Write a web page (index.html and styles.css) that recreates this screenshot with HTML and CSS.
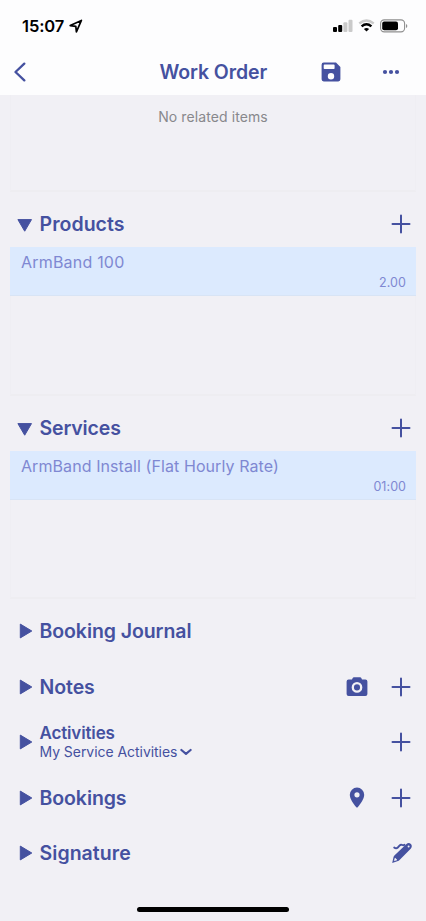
FILE: index.html
```html
<!DOCTYPE html>
<html lang="en">
<head>
<meta charset="utf-8">
<title>Work Order</title>
<link rel="stylesheet" href="styles.css">
</head>
<body>
<svg class="defs" aria-hidden="true">
  <symbol id="plus" viewBox="0 0 20 20"><path d="M10 1.5v17M1.5 10h17" fill="none" stroke="currentColor" stroke-width="2" stroke-linecap="round"/></symbol>
  <symbol id="down" viewBox="0 0 16 16"><path d="M.9 2.6h13.6L7.700 14.2z" fill="currentColor" stroke="currentColor" stroke-width="1" stroke-linejoin="round"/></symbol>
  <symbol id="right" viewBox="0 0 16 16"><path d="M3.3 1.1v13.8L14.8 8z" fill="currentColor" stroke="currentColor" stroke-width="1" stroke-linejoin="round"/></symbol>
</svg>
<div class="phone">
  <header class="top">
    <div class="status">
      <span class="time">15:07</span>
      <svg class="locate" viewBox="0 0 14 14"><path d="M12.4 1.4L1.2 6.6l5.6.7.6 5.6z" fill="none" stroke="#000" stroke-width="1.7" stroke-linejoin="round"/></svg>
      <div class="indicators">
        <svg width="20" height="13" viewBox="0 0 20 13"><g fill="#000"><rect x="0" y="8" width="4" height="5" rx="1"/><rect x="5.2" y="6" width="4" height="7" rx="1"/></g><g fill="#cacaca"><rect x="10.4" y="3.3" width="4" height="9.7" rx="1"/><rect x="15.5" y="0.8" width="4" height="12.2" rx="1"/></g></svg>
        <svg class="wifi" width="17" height="13" viewBox="0 0 17 13"><path d="M1.3 4.5Q8.5-1.6 15.7 4.5" fill="none" stroke="#cacaca" stroke-width="2.3"/><path d="M3.6 7.3Q8.5 3 13.4 7.3" fill="none" stroke="#000" stroke-width="2.4"/><path d="M5.9 9.9Q8.5 7.9 11.1 9.9L8.5 12.6z" fill="#000"/></svg>
        <svg class="battery" width="28" height="14" viewBox="0 0 28 14"><rect x=".6" y=".9" width="24" height="12" rx="3.6" fill="none" stroke="#8f8f8f" stroke-width="1.1"/><rect x="2.2" y="2.5" width="15.8" height="8.8" rx="2" fill="#000"/><path d="M26 5v4q1.3-.7 1.3-2T26 5" fill="#8f8f8f"/></svg>
      </div>
    </div>
    <nav class="nav">
      <svg class="back" viewBox="0 0 12 20"><path d="M10.3 1.6L1.5 10l8.800 8.400" fill="none" stroke="currentColor" stroke-width="2.3" stroke-linecap="round" stroke-linejoin="round"/></svg>
      <h1>Work Order</h1>
      <svg class="save" viewBox="0 0 20 20"><path fill="currentColor" fill-rule="evenodd" d="M2.7.6H15l4.4 4.4v12.3q0 2.1-2.1 2.1H2.7Q.6 19.4.6 17.3V2.7Q.6.6 2.7.6zM3.5 2.6q-.8 0-.8.8v2.8q0 .8.8.8h9.3q.8 0 .8-.8V3.4q0-.8-.8-.8zM10 11a3.2 3.2 0 1 0 0 6.4a3.2 3.2 0 0 0 0-6.4z"/></svg>
      <svg class="more" viewBox="0 0 18 6"><g fill="currentColor"><circle cx="3" cy="3" r="2.1"/><circle cx="9" cy="3" r="2.1"/><circle cx="15" cy="3" r="2.1"/></g></svg>
    </nav>
  </header>

  <main>
    <div class="card related">No related items</div>

    <section>
      <div class="head">
        <svg class="tri"><use href="#down"/></svg><h2 class="products">Products</h2><svg class="plus"><use href="#plus"/></svg>
      </div>
      <div class="card list">
        <div class="item"><div class="name wide">ArmBand 100</div><div class="value">2.00</div></div>
      </div>
    </section>

    <section>
      <div class="head">
        <svg class="tri"><use href="#down"/></svg><h2 class="services">Services</h2><svg class="plus"><use href="#plus"/></svg>
      </div>
      <div class="card list">
        <div class="item"><div class="name">ArmBand Install (Flat Hourly Rate)</div><div class="value">01:00</div></div>
      </div>
    </section>

    <div class="rows">
      <div class="row"><svg class="tri"><use href="#right"/></svg><h2>Booking Journal</h2></div>
      <div class="row"><svg class="tri"><use href="#right"/></svg><h2>Notes</h2>
        <svg class="extra" viewBox="0 0 22 22"><path fill="currentColor" d="M7.9 1.2h6.2q.8 0 1.2.9l.7 1.3h3.4q2 0 2 2v12.700q0 2-2 2H2.600q-2 0-2-2V5.400q0-2 2-2H6l.7-1.300q.4-.9 1.200-.9z"/><circle cx="11" cy="11.400" r="4.200" fill="none" stroke="#f1f0f5" stroke-width="2.300"/></svg>
        <svg class="plus"><use href="#plus"/></svg></div>
      <div class="row"><svg class="tri"><use href="#right"/></svg>
        <div class="stack"><h3>Activities</h3><div class="view">My Service Activities<svg class="caret" viewBox="0 0 12 8"><path d="M1.4 2L6 5.800 10.600 2" fill="none" stroke="currentColor" stroke-width="2.200" stroke-linecap="round" stroke-linejoin="round"/></svg></div></div>
        <svg class="plus"><use href="#plus"/></svg></div>
      <div class="row"><svg class="tri"><use href="#right"/></svg><h2>Bookings</h2>
        <svg class="extra" viewBox="0 0 22 22"><path fill="currentColor" fill-rule="evenodd" d="M11 .6a7.200 7.200 0 0 0-7.200 7.200c0 4 3.600 9.200 6.300 12.200q.9 1 1.800 0c2.700-3 6.300-8.200 6.300-12.200A7.200 7.200 0 0 0 11 .6zM11 5.200a2.600 2.600 0 1 1 0 5.200a2.600 2.600 0 0 1 0-5.200z"/></svg>
        <svg class="plus"><use href="#plus"/></svg></div>
      <div class="row"><svg class="tri"><use href="#right"/></svg><h2 class="signature">Signature</h2>
        <svg class="pen" viewBox="0 0 22 22"><path fill="currentColor" d="M1.200 20.900l1.400-6.200Q2.800 14 3.400 13.400L15.200 2.200q2.500-2.200 4.700-.2 1.900 2.200-.2 4.700L8.300 18.200q-.6.6-1.300.8z"/><path d="M3.200 18.700l.9-2.700 1.900 1.900z" fill="#f1f0f5" stroke="#f1f0f5" stroke-width=".5"/><circle cx="17.600" cy="4.500" r="1" fill="#f1f0f5"/><path d="M3.200 5.500q1.900 1.600 3.600 0l1.700-1.900q1.400-1.500 2.800-.6 1.200.6 2.200-.2" fill="none" stroke="currentColor" stroke-width="1.900" stroke-linecap="round"/></svg></div>
    </div>
  </main>
  <footer><div class="home"></div></footer>
</div>
</body>
</html>
```
FILE: styles.css
```css
* { box-sizing: border-box; }
body { margin: 0; background: #f1f0f5; color: #4551a0; font-family: Inter, "Liberation Sans", sans-serif; }
.defs { position: absolute; width: 0; height: 0; }
.phone { width: 426px; height: 921px; display: flex; flex-direction: column; overflow: hidden; }
svg { display: block; flex: none; }
h1, h2, h3 { margin: 0; font-weight: 600; white-space: nowrap; }

.top { height: 95px; background: #fdfdfe; }
.status { height: 51px; display: flex; align-items: center; padding: 0 18px 0 22px; }
.time { color: #000; font-size: 16.5px; font-weight: 600; letter-spacing: -.1px; width: 44px; white-space: nowrap; }
.locate { width: 14px; height: 14px; margin-left: 3px; }
.indicators { margin-left: auto; display: flex; align-items: center; }
.wifi { margin-left: 5px; }
.battery { margin-left: 5px; }
.nav { height: 42px; display: flex; align-items: center; padding: 0 26px 0 14px; }
.back { width: 12px; height: 20px; }
h1 { font-size: 19.5px; letter-spacing: -.1px; margin-left: 133.5px; width: 111px; }
.save { width: 20px; height: 20px; margin-left: auto; }
.more { width: 18px; height: 6px; margin-left: 41px; }

main { flex: 1; }
.card { margin: 0 10px; border: 1px solid #efeef3; border-top: 0; border-bottom: 2px solid #eeedf1; }
.related { height: 97px; padding-top: 13px; font-size: 14px; line-height: 18px; letter-spacing: .1px; color: #88888c; text-align: center; }
.head { height: 55px; padding: 9px 15px 0 17px; display: flex; align-items: center; }
.tri { width: 16px; height: 16px; margin-right: 6.5px; }
.head .tri { position: relative; top: 1px; }
.plus { width: 20px; height: 20px; margin-left: auto; }
h2 { font-size: 19.5px; line-height: 24px; letter-spacing: -.08px; }
.services { letter-spacing: -.15px; }
.products { letter-spacing: .05px; }
.signature { letter-spacing: .05px; }
.list { height: 148.5px; }
.item { height: 49px; margin: 0 -1px; padding: 5px 10px 0 11px; background: #dceafe; border-bottom: 1px solid #d8e4f5; color: #7f88d2; }
.name { font-size: 16px; line-height: 21px; letter-spacing: .08px; }
.wide { letter-spacing: .2px; }
.value { font-size: 12.5px; line-height: 19px; letter-spacing: .05px; text-align: right; }

.rows { padding-top: 4.5px; }
.row { height: 55.5px; display: flex; align-items: center; padding: 0 15px 0 17px; }
.extra { width: 22px; height: 22px; margin-left: auto; }
.extra + .plus { margin-left: 23px; }
.pen { width: 22px; height: 22px; margin: 0 -2px 0 auto; }
h3 { font-size: 17px; line-height: 20px; letter-spacing: -.15px; }
.view { display: flex; align-items: center; font-size: 14px; line-height: 18px; letter-spacing: -.05px; white-space: nowrap; }
.caret { width: 12px; height: 8px; margin-left: 3px; }
footer { height: 16px; display: flex; justify-content: center; }
.home { width: 152px; height: 5px; margin-top: 2px; border-radius: 3px; background: #000; }
```
